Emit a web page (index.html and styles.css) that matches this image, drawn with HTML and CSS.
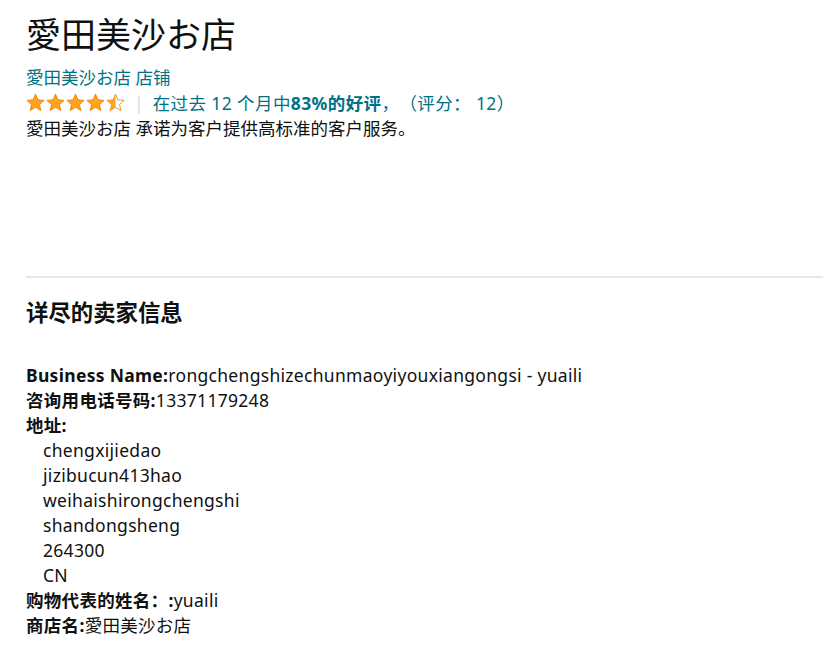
FILE: index.html
```html
<!DOCTYPE html>
<html lang="zh-CN">
<head>
  <meta charset="UTF-8">
  <title>愛田美沙お店</title>
  <link rel="stylesheet" href="styles.css">
</head>
<body>
<div class="seller">
  <h1 class="seller-name">愛田美沙お店</h1>
  <a class="store-link" href="#">愛田美沙お店 店铺</a>
  <div class="rating-row">
    <svg class="stars" width="102" height="20" viewBox="0 0 102 20">
      <defs>
        <path id="star" d="M9.5 1.2l2.5 5.6 6.1.6-4.6 4.1 1.4 6-5.4-3.2-5.4 3.2 1.4-6L0.9 7.4l6.1-.6z"/>
        <clipPath id="half"><rect x="0" y="0" width="9.5" height="20"/></clipPath>
      </defs>
      <use href="#star" x="0" y="0" class="full"/>
      <use href="#star" x="20" y="0" class="full"/>
      <use href="#star" x="40" y="0" class="full"/>
      <use href="#star" x="60" y="0" class="full"/>
      <g transform="translate(80 0)">
        <use href="#star" class="empty"/>
        <use href="#star" class="fill-only" clip-path="url(#half)"/>
      </g>
    </svg>
    <span class="divider">|</span>
    <a class="feedback" href="#">在过去 12 个月中<b>83%的好评</b>，（评分： 12）</a>
  </div>
  <p class="promise">愛田美沙お店 承诺为客户提供高标准的客户服务。</p>
</div>

<hr class="rule">

<div class="details">
  <h3 class="details-title">详尽的卖家信息</h3>
  <div class="info">
    <div><b>Business Name:</b>rongchengshizechunmaoyiyouxiangongsi - yuaili</div>
    <div><b>咨询用电话号码:</b>13371179248</div>
    <div><b>地址:</b></div>
    <div class="addr">chengxijiedao</div>
    <div class="addr">jizibucun413hao</div>
    <div class="addr">weihaishirongchengshi</div>
    <div class="addr">shandongsheng</div>
    <div class="addr">264300</div>
    <div class="addr">CN</div>
    <div><b>购物代表的姓名：:</b>yuaili</div>
    <div><b>商店名:</b>愛田美沙お店</div>
  </div>
</div>
</body>
</html>
```

FILE: styles.css
```css
body {
  margin: 0;
  font-family: "Noto Sans", "Noto Sans CJK SC", sans-serif;
  font-size: 17.5px;
  color: #0f1111;
  background: #fff;
  text-spacing-trim: space-all;
}
a {
  color: #007185;
  text-decoration: none;
}
.seller {
  padding: 15px 26px 0;
}
.seller-name {
  margin: 0;
  font-size: 35px;
  font-weight: normal;
  line-height: 40px;
}
.store-link {
  display: block;
  margin-top: 10px;
  line-height: 25px;
}
.rating-row {
  display: flex;
  align-items: center;
  height: 25px;
}
.stars .full {
  fill: #ffa41c;
  stroke: #e67a00;
  stroke-width: 0.8;
}
.stars .empty {
  fill: #fff;
  stroke: #e67a00;
  stroke-width: 0.8;
}
.stars .fill-only {
  fill: #ffa41c;
}
.divider {
  color: #ddd;
  margin: 0 9px 0 6px;
}
.feedback {
  letter-spacing: 0.4px;
}
.feedback b {
  font-weight: bold;
}
.promise {
  margin: 0;
  line-height: 26px;
  font-size: 17.5px;
}
.rule {
  margin: 135px 0 0 26px;
  border: 0;
  border-top: 2px solid #e7e7e7;
}
.details {
  padding: 0 26px 20px;
}
.details-title {
  margin: 20px 0 0;
  font-size: 22.4px;
  line-height: 30px;
  font-weight: bold;
}
.info {
  margin-top: 35px;
  line-height: 25px;
  letter-spacing: 0.3px;
}
.info b {
  font-weight: bold;
}
.addr {
  padding-left: 17px;
}
```
